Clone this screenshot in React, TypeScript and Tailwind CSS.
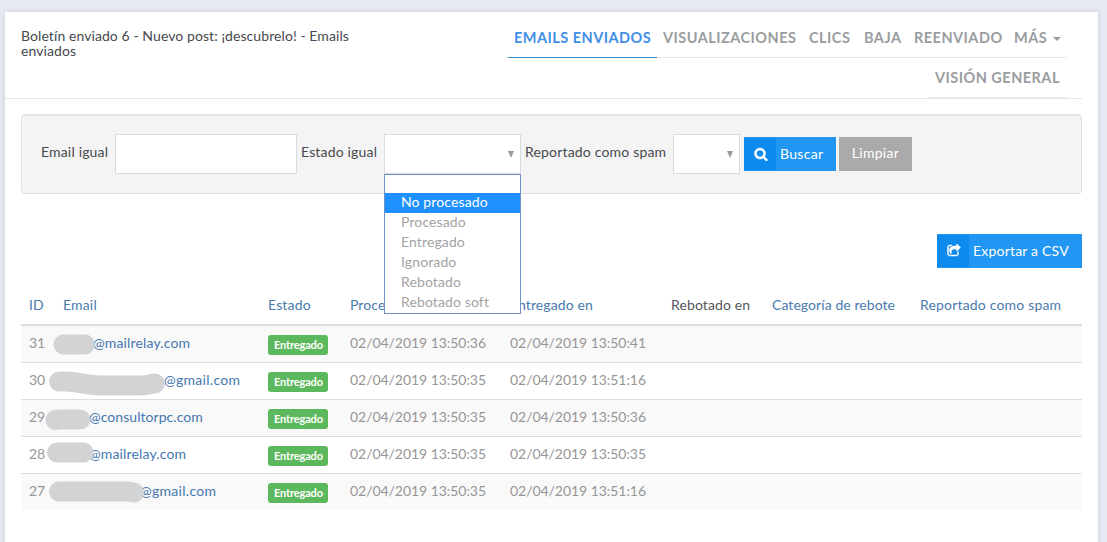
import React from 'react';

interface Row {
    id: number;
    domain: string;
    // left padding of the visible part of the address
    indent: string;
    processed: string;
    delivered: string;
    mask: string;
}

const rows: Row[] = [
    { id: 31, domain: '@mailrelay.com', indent: 'pl-[38px] tracking-[0.14px]', processed: '02/04/2019 13:50:36', delivered: '02/04/2019 13:50:41', mask: 'M12.5 18.5H34' },
    { id: 30, domain: '@gmail.com', indent: 'pl-[109px] tracking-[0.28px]', processed: '02/04/2019 13:50:35', delivered: '02/04/2019 13:51:16', mask: 'M8 18.5H16C28 19 34 22 48 22.5H88C98 22.5 98 20.5 104 20.5' },
    { id: 29, domain: '@consultorpc.com', indent: 'pl-[34px] tracking-[0.05px]', processed: '02/04/2019 13:50:35', delivered: '02/04/2019 13:50:36', mask: 'M4.5 20L10 19.5H29.5' },
    { id: 28, domain: '@mailrelay.com', indent: 'pl-[34px] tracking-[0.14px]', processed: '02/04/2019 13:50:35', delivered: '02/04/2019 13:50:35', mask: 'M6 15.5H32.5' },
    { id: 27, domain: '@gmail.com', indent: 'pl-[85px] tracking-[0.28px]', processed: '02/04/2019 13:50:35', delivered: '02/04/2019 13:51:16', mask: 'M8 17.5H77L83 18.5' },
];

const options = ['', 'No procesado', 'Procesado', 'Entregado', 'Ignorado', 'Rebotado', 'Rebotado soft'];

const SearchIcon = () => (
    <svg viewBox="0 0 1792 1792" className="w-3.5 h-3.5 ml-px" fill="currentColor" stroke="currentColor" strokeWidth="60">
        <path d="M1216 832q0-185-131.5-316.5t-316.5-131.5-316.5 131.5-131.5 316.5 131.5 316.5 316.5 131.5 316.5-131.5 131.5-316.5zm512 832q0 52-38 90t-90 38q-54 0-90-38l-343-342q-179 124-399 124-143 0-273.5-55.5t-225-150-150-225-55.5-273.5 55.5-273.5 150-225 225-150 273.5-55.5 273.5 55.5 225 150 150 225 55.5 273.5q0 220-124 399l343 343q37 37 37 90z" />
    </svg>
);

const ShareIcon = () => (
    <svg viewBox="0 0 1792 1792" className="w-3.5 h-3.5 ml-0.5" fill="currentColor" stroke="currentColor" strokeWidth="60">
        <path d="M1472 989v259q0 119-84.5 203.5t-203.5 84.5h-832q-119 0-203.5-84.5t-84.5-203.5v-832q0-119 84.5-203.5t203.5-84.5h255q13 0 22.5 9.5t9.5 22.5q0 27-26 32-77 26-133 60-10 4-16 4h-112q-66 0-113 47t-47 113v832q0 66 47 113t113 47h832q66 0 113-47t47-113v-214q0-19 18-29 28-13 54-37 16-16 35-8 21 9 21 29zm237-496l-384 384q-18 19-45 19-12 0-25-5-39-17-39-59v-192h-160q-323 0-438 131-119 137-74 473 3 23-20 34-8 2-12 2-16 0-26-13-10-14-21-31t-39.5-68.5-49.5-99.5-38.5-114-17.5-122q0-49 3.5-91t14-90 28-88 47-81.5 68.5-74 94.5-61.5 124.5-48.5 159.5-30.5 196.5-11h160v-192q0-42 39-59 13-5 25-5 26 0 45 19l384 384q19 19 19 45t-19 45z" />
    </svg>
);

const SelectArrow = () => (
    <svg viewBox="0 0 6 7" className="w-1.5 h-[7px]" fill="#999999">
        <path d="M0 0H6L3 7Z" />
    </svg>
);

const Header = () => (
    <header className="h-[87px] mr-4 pl-4 border-b border-[#e5e5e5] flex justify-between">
        <h1 className="w-[345px] pt-4 leading-[15px] text-[#46494e] tracking-[0.08px]">
            Boletín enviado 6 - Nuevo post: ¡descubrelo! - Emails enviados
        </h1>
        <nav className="pt-1.5 mr-[15px] flex flex-col items-end font-bold text-[14.5px] leading-10 tracking-[0.47px] text-[#9a9d9f] whitespace-nowrap">
            <div className="flex h-10 *:border-b *:pl-1.5">
                <a className="w-[149px] border-[#2f8cc8] text-[#3f8fe8]">EMAILS ENVIADOS</a>
                <a className="w-[146px] border-[#e8e8e8]">VISUALIZACIONES</a>
                <a className="w-[55px] border-[#e8e8e8]">CLICS</a>
                <a className="w-[50px] border-[#e8e8e8]">BAJA</a>
                <a className="w-[100px] border-[#e8e8e8]">REENVIADO</a>
                <a className="w-[59px] border-[#e8e8e8] flex items-start">
                    MÁS
                    <svg viewBox="0 0 8 4" className="w-2 h-1 ml-1.5 mt-[19px]" fill="currentColor"><path d="M0 0H8L4 4Z" /></svg>
                </a>
            </div>
            <a className="h-10 w-[138px] border-b border-[#e8e8e8] pl-1.5">VISIÓN GENERAL</a>
        </nav>
    </header>
);

const StateDropdown = () => (
    <ul className="absolute -left-px top-[39px] z-10 w-[137px] h-[140px] bg-white border border-[#6f93c4] text-[#a3a3a3] leading-[17px] tracking-[0.12px]">
        {options.map((option) => (
            <li
                key={option}
                className={`pl-4 ${option === '' ? 'h-[18px]' : 'h-5'} ${option === 'No procesado' ? 'bg-[#1e90ff] text-white' : ''}`}
            >
                {option}
            </li>
        ))}
    </ul>
);

const Filters = () => (
    <form className="h-20 mx-4 mt-[15px] pl-[19px] flex items-center rounded-[4px] border border-[#e1e1e1] bg-[#f4f4f4] shadow-[inset_0_1px_1px_rgba(0,0,0,0.05)] text-[#46494e] whitespace-nowrap">
        <label className="w-[74px] pb-1 tracking-[0.17px]">Email igual</label>
        <input className="w-[182px] h-10 bg-white border border-[#d8dbe2]" />
        <label className="w-[87px] pl-1 pb-1 tracking-[0.17px]">Estado igual</label>
        <div className="relative w-[137px] h-10 pr-1.5 flex items-center justify-end bg-white border border-[#d8dbe2]">
            <SelectArrow />
            <StateDropdown />
        </div>
        <label className="w-[152px] pl-1 pb-1 tracking-[0.18px]">Reportado como spam</label>
        <div className="w-[67px] h-10 pr-1.5 flex items-center justify-end bg-white border border-[#d8dbe2]">
            <SelectArrow />
        </div>
        <button type="button" className="w-[92px] h-[34px] ml-1 flex items-center bg-[#2196f3] text-white tracking-[0.3px]">
            <span className="w-8 h-8 flex items-center justify-center bg-[#0d8aee]"><SearchIcon /></span>
            <span className="pl-1">Buscar</span>
        </button>
        <button type="button" className="w-[73px] h-[34px] ml-[3px] pb-0.5 bg-[#aaaaaa] text-white tracking-[0.28px]">Limpiar</button>
    </form>
);

const App: React.FC = () => (
    <div className="h-[542px] overflow-hidden pt-3 pl-[5px] pr-[9px] bg-[#e7eaf2] font-['Lato',sans-serif] text-sm">
        <div className="h-[540px] bg-white shadow-[0_0_6px_rgba(0,0,0,0.12)]">
            <Header />
            <Filters />
            <div className="mx-4 mt-10 flex justify-end">
                <button type="button" className="w-[145px] h-[34px] flex items-center bg-[#2196f3] text-white tracking-[0.2px]">
                    <span className="w-8 h-8 flex items-center justify-center bg-[#0d8aee]"><ShareIcon /></span>
                    <span className="pl-1">Exportar a CSV</span>
                </button>
            </div>
            <table className="w-[1061px] mx-4 mt-[17px] table-fixed border-collapse whitespace-nowrap">
                <colgroup>
                    <col className="w-[34px]" />
                    <col className="w-[205px]" />
                    <col className="w-[82px]" />
                    <col className="w-[160px]" />
                    <col className="w-[161px]" />
                    <col className="w-[101px]" />
                    <col className="w-[148px]" />
                    <col className="w-[170px]" />
                </colgroup>
                <thead>
                    <tr className="h-10 border-b-2 border-[#dddddd] text-left text-[#4a7aae] *:px-2 *:font-normal">
                        <th>ID</th>
                        <th className="tracking-[0.17px]">Email</th>
                        <th className="tracking-[0.17px]">Estado</th>
                        <th className="tracking-[0.1px]">Procesado en</th>
                        <th className="tracking-[0.1px]">Entregado en</th>
                        <th className="tracking-[0.11px] text-[#53575c]">Rebotado en</th>
                        <th className="tracking-[0.07px]">Categoría de rebote</th>
                        <th className="tracking-[0.18px]">Reportado como spam</th>
                    </tr>
                </thead>
                <tbody>
                    {rows.map((row) => (
                        <tr key={row.id} className="h-[37px] border-t border-[#dddddd] text-[#969696] odd:bg-[#f9f9f9] *:px-2 *:pb-0.5">
                            <td>{row.id}</td>
                            <td className="relative px-0! text-[#4577b0]">
                                <span className={row.indent}>{row.domain}</span>
                                <svg className="absolute -left-1 top-0 w-[120px] h-9 overflow-visible" fill="none" stroke="#d1d3d5" strokeWidth="20" strokeLinecap="round" strokeLinejoin="round">
                                    <path d={row.mask} />
                                </svg>
                            </td>
                            <td className="pt-0.5 pb-0!">
                                <span className="w-[60px] h-5 pl-1.5 block rounded-[3px] bg-[#5cb85c] text-[11px] leading-[19px] font-bold tracking-[-0.15px] text-white">Entregado</span>
                            </td>
                            <td className="tracking-[-0.05px]">{row.processed}</td>
                            <td className="tracking-[-0.05px]">{row.delivered}</td>
                            <td />
                            <td />
                            <td />
                        </tr>
                    ))}
                </tbody>
            </table>
        </div>
    </div>
);

export default App;
